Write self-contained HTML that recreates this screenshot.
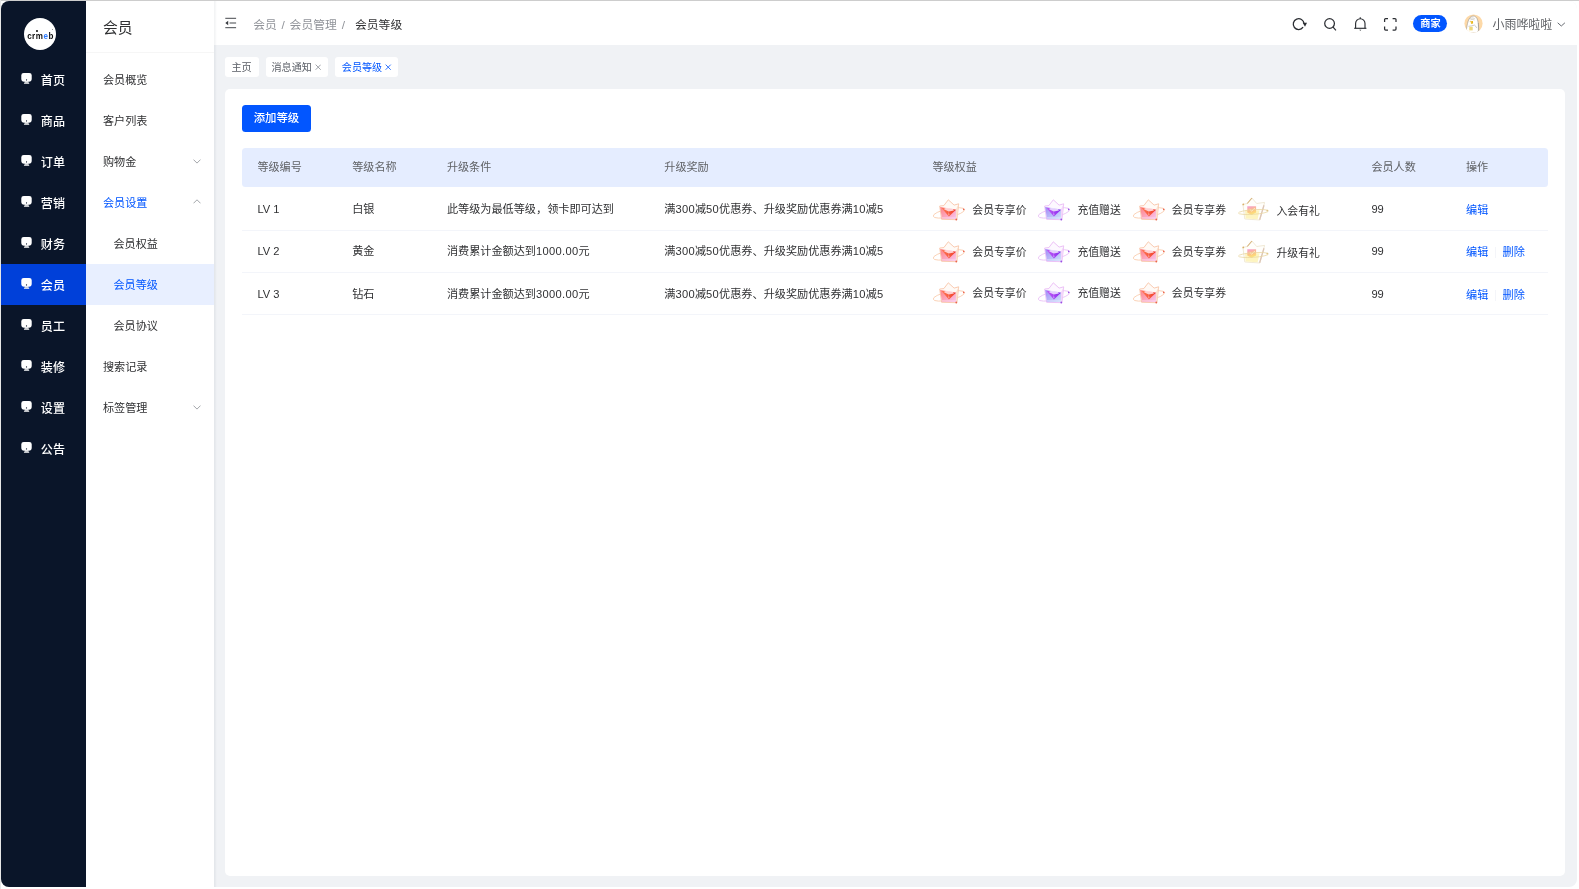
<!DOCTYPE html>
<html lang="zh-CN">
<head>
<meta charset="utf-8">
<title>会员等级</title>
<style>
*{box-sizing:border-box;margin:0;padding:0}
html,body{width:1579px;height:889px;overflow:hidden;background:#fff}
body{font-family:"Liberation Sans","Noto Sans CJK SC",sans-serif;color:#303133;position:relative;font-size:11.1px;-webkit-font-smoothing:antialiased}
.abs{position:absolute}
#topline{left:0;top:0;width:1579px;height:1px;background:#cdcdcd}
#leftline{left:0;top:0;width:1px;height:889px;background:#e6e6e6}
#app{will-change:transform;left:1px;top:1px;width:1576px;height:886px;border-radius:8px;overflow:hidden;background:#f0f2f5}
/* dark sidebar */
#dark{left:0;top:0;width:85.2px;height:886px;background:#0a1529}
#logo{left:22.6px;top:16.6px;width:32.9px;height:32.9px;border-radius:50%;background:#fff}
#logo span{position:absolute;left:-4px;width:41px;top:13.9px;text-align:center;font-weight:bold;font-size:9.6px;line-height:10px;letter-spacing:0.6px;color:#0d0d0d;transform:scaleX(.84)}
#logo b{color:#2d7bff}
#logo i{position:absolute;left:12.8px;top:12.7px;width:1.8px;height:1.8px;border-radius:50%;background:#111}
#logo u{position:absolute;left:28.6px;top:11.8px;width:1px;height:1px;border-radius:50%;background:#777}
.dm{left:0;width:85.2px;height:41px;color:#fff;font-size:12.05px;font-weight:500}
.dm.on{background:#0040d9;width:85.7px}
.dm svg{position:absolute;left:19.9px;top:14.3px}
.dm span{position:absolute;left:39.8px;top:1.7px;line-height:41px;letter-spacing:0.1px}
/* sub sidebar */
#sub{left:85px;top:0;width:128px;height:886px;background:#fff}
#subtitle{left:17px;top:1px;line-height:52px;font-size:14.8px;color:#303133}
#subline{left:0;top:50.8px;width:128px;height:1px;background:#f6f6f6}
.sm{left:0;width:128px;height:41px;font-size:11.1px;color:#303133}
.sm span{position:absolute;left:17px;top:0.5px;line-height:41px}
.sm.l2 span{left:27.5px}
.sm.act span{color:#0256ff}
.sm.on{background:#e8efff}
.sm.on span{color:#0256ff}
.sm svg{position:absolute;left:107px;top:18.2px}
.sm.act svg{top:17px}
/* header */
#hdr{left:213px;top:0;width:1363px;height:44px;background:#fff}
#shadow{left:213px;top:0;width:3px;height:886px;background:linear-gradient(90deg,rgba(0,21,41,.06),rgba(0,21,41,0))}
.bc{top:1.8px;line-height:44px;font-size:11.8px;color:#909399;white-space:nowrap}
.bc.cur{color:#303133}
#badge{left:1412.5px;top:14px;width:34px;height:17.5px;border-radius:9px;background:#0256ff;color:#fff;font-size:10.2px;line-height:17.5px;text-align:center;font-weight:bold}
#uname{left:1492px;top:1.5px;line-height:45px;font-size:11.95px;color:#606266;white-space:nowrap}
/* tabs */
.tab{top:56px;height:20px;background:#fff;border-radius:3px;font-size:10.1px;line-height:22px;color:#5a5e66;white-space:nowrap;padding-left:6.5px}
.tab.on{color:#0256ff}
.tab i{font-style:normal;position:absolute;top:0}
/* card */
#card{left:224px;top:88px;width:1340px;height:787px;background:#fff;border-radius:5px}
#btn{left:16.7px;top:16px;width:69.5px;height:26.8px;border-radius:3.5px;background:#0256ff;color:#fff;font-size:11.4px;line-height:26px;text-align:center;font-weight:500}
#thead{left:16.5px;top:59px;width:1306.6px;height:39px;background:#e5edff;border-radius:3.5px}
.th{top:0;line-height:39px;color:#606266;font-size:11.1px;white-space:nowrap}
.row{left:16.5px;width:1306.6px;height:42.4px;border-bottom:1px solid #f3f5fa}
.td{top:0.8px;line-height:42px;font-size:11.15px;color:#303133;white-space:nowrap}
.lk{color:#0256ff}
.rt{top:0;height:42px}
.rt svg{position:absolute;left:0;top:9.5px}
.rt span{position:absolute;left:39.2px;top:0.8px;line-height:42px;font-size:10.85px;white-space:nowrap;color:#303133}
.n{letter-spacing:.3px}
</style>
</head>
<body>
<div id="app" class="abs">

<!-- DARK SIDEBAR -->
<div id="dark" class="abs">
  <div id="logo" class="abs"><span>crm<b>e</b>b</span><i></i><u></u></div>
  <div class="dm abs" style="top:58px"><svg width="11.6" height="11.4" viewBox="0 0 12 12" preserveAspectRatio="none"><path d="M2.8 0h5.8a2.5 2.5 0 0 1 2.5 2.5v3.6a3 3 0 0 1-3 3H3.3a3 3 0 0 1-3-3V2.5A2.5 2.5 0 0 1 2.8 0z" fill="#fff"/><path d="M4.3 8.8h3l1.4 2.6H2.9z" fill="#fff"/><circle cx="5.7" cy="7.3" r="0.65" fill="#0a1529"/><path d="M3.3 9.9h5" stroke="#0a1529" stroke-width="0.5" opacity=".5"/></svg><span>首页</span></div>
  <div class="dm abs" style="top:99px"><svg width="11.6" height="11.4" viewBox="0 0 12 12" preserveAspectRatio="none"><path d="M2.8 0h5.8a2.5 2.5 0 0 1 2.5 2.5v3.6a3 3 0 0 1-3 3H3.3a3 3 0 0 1-3-3V2.5A2.5 2.5 0 0 1 2.8 0z" fill="#fff"/><path d="M4.3 8.8h3l1.4 2.6H2.9z" fill="#fff"/><circle cx="5.7" cy="7.3" r="0.65" fill="#0a1529"/><path d="M3.3 9.9h5" stroke="#0a1529" stroke-width="0.5" opacity=".5"/></svg><span>商品</span></div>
  <div class="dm abs" style="top:140px"><svg width="11.6" height="11.4" viewBox="0 0 12 12" preserveAspectRatio="none"><path d="M2.8 0h5.8a2.5 2.5 0 0 1 2.5 2.5v3.6a3 3 0 0 1-3 3H3.3a3 3 0 0 1-3-3V2.5A2.5 2.5 0 0 1 2.8 0z" fill="#fff"/><path d="M4.3 8.8h3l1.4 2.6H2.9z" fill="#fff"/><circle cx="5.7" cy="7.3" r="0.65" fill="#0a1529"/><path d="M3.3 9.9h5" stroke="#0a1529" stroke-width="0.5" opacity=".5"/></svg><span>订单</span></div>
  <div class="dm abs" style="top:181px"><svg width="11.6" height="11.4" viewBox="0 0 12 12" preserveAspectRatio="none"><path d="M2.8 0h5.8a2.5 2.5 0 0 1 2.5 2.5v3.6a3 3 0 0 1-3 3H3.3a3 3 0 0 1-3-3V2.5A2.5 2.5 0 0 1 2.8 0z" fill="#fff"/><path d="M4.3 8.8h3l1.4 2.6H2.9z" fill="#fff"/><circle cx="5.7" cy="7.3" r="0.65" fill="#0a1529"/><path d="M3.3 9.9h5" stroke="#0a1529" stroke-width="0.5" opacity=".5"/></svg><span>营销</span></div>
  <div class="dm abs" style="top:222px"><svg width="11.6" height="11.4" viewBox="0 0 12 12" preserveAspectRatio="none"><path d="M2.8 0h5.8a2.5 2.5 0 0 1 2.5 2.5v3.6a3 3 0 0 1-3 3H3.3a3 3 0 0 1-3-3V2.5A2.5 2.5 0 0 1 2.8 0z" fill="#fff"/><path d="M4.3 8.8h3l1.4 2.6H2.9z" fill="#fff"/><circle cx="5.7" cy="7.3" r="0.65" fill="#0a1529"/><path d="M3.3 9.9h5" stroke="#0a1529" stroke-width="0.5" opacity=".5"/></svg><span>财务</span></div>
  <div class="dm abs on" style="top:263px"><svg width="11.6" height="11.4" viewBox="0 0 12 12" preserveAspectRatio="none"><path d="M2.8 0h5.8a2.5 2.5 0 0 1 2.5 2.5v3.6a3 3 0 0 1-3 3H3.3a3 3 0 0 1-3-3V2.5A2.5 2.5 0 0 1 2.8 0z" fill="#fff"/><path d="M4.3 8.8h3l1.4 2.6H2.9z" fill="#fff"/><circle cx="5.7" cy="7.3" r="0.65" fill="#0a1529"/><path d="M3.3 9.9h5" stroke="#0a1529" stroke-width="0.5" opacity=".5"/></svg><span>会员</span></div>
  <div class="dm abs" style="top:304px"><svg width="11.6" height="11.4" viewBox="0 0 12 12" preserveAspectRatio="none"><path d="M2.8 0h5.8a2.5 2.5 0 0 1 2.5 2.5v3.6a3 3 0 0 1-3 3H3.3a3 3 0 0 1-3-3V2.5A2.5 2.5 0 0 1 2.8 0z" fill="#fff"/><path d="M4.3 8.8h3l1.4 2.6H2.9z" fill="#fff"/><circle cx="5.7" cy="7.3" r="0.65" fill="#0a1529"/><path d="M3.3 9.9h5" stroke="#0a1529" stroke-width="0.5" opacity=".5"/></svg><span>员工</span></div>
  <div class="dm abs" style="top:345px"><svg width="11.6" height="11.4" viewBox="0 0 12 12" preserveAspectRatio="none"><path d="M2.8 0h5.8a2.5 2.5 0 0 1 2.5 2.5v3.6a3 3 0 0 1-3 3H3.3a3 3 0 0 1-3-3V2.5A2.5 2.5 0 0 1 2.8 0z" fill="#fff"/><path d="M4.3 8.8h3l1.4 2.6H2.9z" fill="#fff"/><circle cx="5.7" cy="7.3" r="0.65" fill="#0a1529"/><path d="M3.3 9.9h5" stroke="#0a1529" stroke-width="0.5" opacity=".5"/></svg><span>装修</span></div>
  <div class="dm abs" style="top:386px"><svg width="11.6" height="11.4" viewBox="0 0 12 12" preserveAspectRatio="none"><path d="M2.8 0h5.8a2.5 2.5 0 0 1 2.5 2.5v3.6a3 3 0 0 1-3 3H3.3a3 3 0 0 1-3-3V2.5A2.5 2.5 0 0 1 2.8 0z" fill="#fff"/><path d="M4.3 8.8h3l1.4 2.6H2.9z" fill="#fff"/><circle cx="5.7" cy="7.3" r="0.65" fill="#0a1529"/><path d="M3.3 9.9h5" stroke="#0a1529" stroke-width="0.5" opacity=".5"/></svg><span>设置</span></div>
  <div class="dm abs" style="top:427px"><svg width="11.6" height="11.4" viewBox="0 0 12 12" preserveAspectRatio="none"><path d="M2.8 0h5.8a2.5 2.5 0 0 1 2.5 2.5v3.6a3 3 0 0 1-3 3H3.3a3 3 0 0 1-3-3V2.5A2.5 2.5 0 0 1 2.8 0z" fill="#fff"/><path d="M4.3 8.8h3l1.4 2.6H2.9z" fill="#fff"/><circle cx="5.7" cy="7.3" r="0.65" fill="#0a1529"/><path d="M3.3 9.9h5" stroke="#0a1529" stroke-width="0.5" opacity=".5"/></svg><span>公告</span></div>
  
</div>

<!-- SUB SIDEBAR -->
<div id="sub" class="abs">
  <div id="subtitle" class="abs">会员</div>
  <div id="subline" class="abs"></div>
  <div class="sm abs " style="top:58px"><span>会员概览</span></div>
  <div class="sm abs " style="top:99px"><span>客户列表</span></div>
  <div class="sm abs " style="top:140px"><span>购物金</span><svg width="8" height="5" viewBox="0 0 8 5"><path d="M0.5 0.6L4 4.1L7.5 0.6" fill="none" stroke="#8c8f94" stroke-width="0.8"/></svg></div>
  <div class="sm abs act" style="top:181px"><span>会员设置</span><svg width="8" height="5" viewBox="0 0 8 5"><path d="M0.5 4.3L4 0.8L7.5 4.3" fill="none" stroke="#8c8f94" stroke-width="0.8"/></svg></div>
  <div class="sm abs l2" style="top:222px"><span>会员权益</span></div>
  <div class="sm abs l2 on" style="top:263px"><span>会员等级</span></div>
  <div class="sm abs l2" style="top:304px"><span>会员协议</span></div>
  <div class="sm abs " style="top:345px"><span>搜索记录</span></div>
  <div class="sm abs " style="top:386px"><span>标签管理</span><svg width="8" height="5" viewBox="0 0 8 5"><path d="M0.5 0.6L4 4.1L7.5 0.6" fill="none" stroke="#8c8f94" stroke-width="0.8"/></svg></div>
  
</div>

<!-- HEADER -->
<div id="hdr" class="abs">
  
  <svg class="abs" style="left:11px;top:16px" width="12" height="12" viewBox="0 0 12 12"><path d="M0.3 1.3h10.8M4.6 6h6.5M0.3 10.7h10.8" stroke="#3a3d42" stroke-width="0.95" fill="none"/><path d="M3.2 3.7v4.6L0.3 6z" fill="#3a3d42"/></svg>
  <div class="bc abs" style="left:39.3px">会员</div>
  <div class="bc abs" style="left:67.6px">/</div>
  <div class="bc abs" style="left:75.6px">会员管理</div>
  <div class="bc abs" style="left:127.8px">/</div>
  <div class="bc abs cur" style="left:141px">会员等级</div>
  <svg class="abs" style="left:1078px;top:16px" width="16" height="15" viewBox="0 0 16 15"><path d="M12.04 6.66A5.4 5.4 0 1 0 11.08 10.23" fill="none" stroke="#2b2e33" stroke-width="1.3"/><path d="M10.7 5.8L15 5.7L13 9.7z" fill="#2b2e33"/></svg>
  <svg class="abs" style="left:1109px;top:16px" width="15" height="15" viewBox="0 0 15 15"><circle cx="6.57" cy="6.5" r="4.85" fill="none" stroke="#2b2e33" stroke-width="1.25"/><path d="M9.9 9.9L12.9 13.3" stroke="#2b2e33" stroke-width="1.25" fill="none"/></svg>
  <svg class="abs" style="left:1139px;top:15px" width="15" height="16" viewBox="0 0 15 16"><path d="M2.6 12.2V7.4a4.7 4.7 0 0 1 9.4 0v4.8" fill="none" stroke="#2b2e33" stroke-width="1.15"/><path d="M1.2 12.3h12.2" stroke="#2b2e33" stroke-width="1.15"/><circle cx="7.3" cy="2.1" r="0.8" fill="#2b2e33"/><path d="M6.2 13.8h2.2l-1.1 1z" fill="#2b2e33"/></svg>
  <svg class="abs" style="left:1169px;top:16px" width="15" height="15" viewBox="0 0 15 15"><path d="M1.6 5V2.6a1 1 0 0 1 1-1H5M9.6 1.6H12a1 1 0 0 1 1 1V5M13 9.6V12a1 1 0 0 1-1 1H9.6M5 13H2.6a1 1 0 0 1-1-1V9.6" fill="none" stroke="#2b2e33" stroke-width="1.25"/></svg>
  <div id="badge" class="abs" style="left:1199.4px;top:13.8px">商家</div>
  <svg class="abs" style="left:1249.5px;top:12.6px" width="19" height="19" viewBox="0 0 19 19"><defs><clipPath id="avc"><circle cx="9.5" cy="9.5" r="9.1"/></clipPath></defs><circle cx="9.5" cy="9.5" r="9.1" fill="#fdd9a8"/><g clip-path="url(#avc)"><path d="M2.2 17.5C3 10 4.5 2.2 9 2c4.8-.2 5.5 6 5.8 14.5L13 19H3z" fill="#fff" stroke="#9a948a" stroke-width="0.6"/><path d="M5.4 7.6l3.6-.6.1 2.6-2.3.4.6-1.2z" fill="#e8b619"/><path d="M4.5 12.3c2-.2 4-.5 6-1.2c1 .6 1.6 1.6 2.2 2.8" fill="none" stroke="#9b958a" stroke-width="0.5"/><rect x="5.3" y="12.8" width="3.4" height="3.6" fill="#efd87a"/><path d="M5.7 4.8c1.5-1.2 3.5-1.2 5.2.2M6.3 6c1.3-.8 2.8-.7 4 .1" fill="none" stroke="#aaa59b" stroke-width="0.5"/><path d="M14.4 9v8" stroke="#8f897f" stroke-width="0.5"/></g></svg>
  <div id="uname" class="abs" style="left:1278.5px">小雨哗啦啦</div>
  <svg class="abs" style="left:1343px;top:20.7px" width="9" height="5" viewBox="0 0 9 5"><path d="M0.7 0.8L4.3 4L7.9 0.8" fill="none" stroke="#5f636a" stroke-width="0.95"/></svg>

</div>
<div id="shadow" class="abs"></div>

<!-- TABS -->
<div class="tab abs" style="left:224px;width:34px">主页</div>
<div class="tab abs" style="left:264.5px;width:62.4px;padding-left:6px">消息通知<svg width="6.4" height="6.4" viewBox="0 0 7 7" style="position:absolute;top:7.2px;left:49.6px"><path d="M0.7 0.7L6.3 6.3M6.3 0.7L0.7 6.3" stroke="#8a8e95" stroke-width="0.9"/></svg></div>
<div class="tab abs on" style="left:334px;width:63.3px;padding-left:6.8px">会员等级<svg width="6.4" height="6.4" viewBox="0 0 7 7" style="position:absolute;top:7.2px;left:50.3px"><path d="M0.7 0.7L6.3 6.3M6.3 0.7L0.7 6.3" stroke="#0256ff" stroke-width="0.9"/></svg></div>

<!-- CARD -->
<div id="card" class="abs">
  <div id="btn" class="abs">添加等级</div>
  <div id="thead" class="abs">
    <div class="th abs" style="left:15.9px">等级编号</div><div class="th abs" style="left:110.7px">等级名称</div><div class="th abs" style="left:205.4px">升级条件</div><div class="th abs" style="left:422.8px">升级奖励</div><div class="th abs" style="left:690.9px">等级权益</div><div class="th abs" style="left:1129.9px">会员人数</div><div class="th abs" style="left:1224.5px">操作</div>
  </div>
  <div class="row abs" style="top:98.0px;height:43.5px"><div class="td abs" style="top:1.2px;left:15.9px">LV 1</div><div class="td abs" style="top:1.2px;left:110.7px">白银</div><div class="td abs" style="top:1.2px;left:205.4px">此等级为最低等级，领卡即可达到</div><div class="td abs" style="top:1.2px;left:422.8px">满<span class="n">300</span>减<span class="n">50</span>优惠券、升级奖励优惠券满<span class="n">10</span>减<span class="n">5</span></div><div class="rt abs" style="left:691.6px"><svg style="top:12.4px" width="33" height="23" viewBox="0 0 33 23"><defs><linearGradient id="c1a" x1="0" y1="0" x2="1" y2="1"><stop offset="0" stop-color="#ff8282"/><stop offset="1" stop-color="#f8c4f0"/></linearGradient><linearGradient id="c1b" x1="0" y1="0" x2="1" y2="0"><stop offset="0" stop-color="#ff7a58"/><stop offset="1" stop-color="#f03c28"/></linearGradient></defs><ellipse cx="15.9" cy="13.9" rx="16" ry="4.1" transform="rotate(-12 15.9 13.9)" fill="none" stroke="#f9c7a6" stroke-width="0.75"/><path d="M6.7 7L10.8 6.6L15.3 0.8L21.1 6.1L25.7 4.8L23.9 20.7L8.6 20.3Z" fill="#fffaf6" stroke="#f7b998" stroke-width="0.75" stroke-linejoin="round"/><path d="M22.9 10.4L25.5 5.2L23.8 20.5L23 20.1Z" fill="#fbdfcd"/><path d="M7.2 7.9L22.9 10.4L23 20.1L8.9 19.7Z" fill="url(#c1a)"/><path d="M8.4 8.7L23 10.7L15.9 17.5Z" fill="url(#c1b)"/><path d="M10.6 9.9L13.3 8.7L19.4 9.5L21 11.4L15.6 12.6Z" fill="#ffe4ea" opacity=".85"/><path d="M15.7 12.8L14.9 16.2L16.8 16.2Z" fill="#ffe4ea" opacity=".45"/><path d="M8.9 18.6L23 19" stroke="#fff" stroke-width="0.5" opacity=".7"/><path d="M29.8 9.5l2 0.5-1.3 1.5z" fill="#e8503a"/><circle cx="23.3" cy="20.5" r="0.9" fill="#e8503a" opacity=".85"/></svg><span style="top:2.4px">会员专享价</span></div><div class="rt abs" style="left:796.7px"><svg style="top:12.4px" width="33" height="23" viewBox="0 0 33 23"><defs><linearGradient id="c2a" x1="0" y1="0" x2="1" y2="1"><stop offset="0" stop-color="#a28af7"/><stop offset="1" stop-color="#cfe2fb"/></linearGradient><linearGradient id="c2b" x1="0" y1="0" x2="1" y2="0"><stop offset="0" stop-color="#c25af4"/><stop offset="1" stop-color="#8a2bf0"/></linearGradient></defs><ellipse cx="15.9" cy="13.9" rx="16" ry="4.1" transform="rotate(-12 15.9 13.9)" fill="none" stroke="#e8b8f5" stroke-width="0.75"/><path d="M6.7 7L10.8 6.6L15.3 0.8L21.1 6.1L25.7 4.8L23.9 20.7L8.6 20.3Z" fill="#fdf8ff" stroke="#e6aef3" stroke-width="0.75" stroke-linejoin="round"/><path d="M22.9 10.4L25.5 5.2L23.8 20.5L23 20.1Z" fill="#f3d6fa"/><path d="M7.2 7.9L22.9 10.4L23 20.1L8.9 19.7Z" fill="url(#c2a)"/><path d="M8.4 8.7L23 10.7L15.9 17.5Z" fill="url(#c2b)"/><path d="M10.6 9.9L13.3 8.7L19.4 9.5L21 11.4L15.6 12.6Z" fill="#f0e6ff" opacity=".85"/><path d="M15.7 12.8L14.9 16.2L16.8 16.2Z" fill="#f0e6ff" opacity=".45"/><path d="M8.9 18.6L23 19" stroke="#fff" stroke-width="0.5" opacity=".7"/><path d="M29.8 9.5l2 0.5-1.3 1.5z" fill="#8a3ae0"/><circle cx="23.3" cy="20.5" r="0.9" fill="#8a3ae0" opacity=".85"/></svg><span style="top:2.4px">充值赠送</span></div><div class="rt abs" style="left:891.1px"><svg style="top:12.4px" width="33" height="23" viewBox="0 0 33 23"><defs><linearGradient id="c3a" x1="0" y1="0" x2="1" y2="1"><stop offset="0" stop-color="#ff8282"/><stop offset="1" stop-color="#f8c4f0"/></linearGradient><linearGradient id="c3b" x1="0" y1="0" x2="1" y2="0"><stop offset="0" stop-color="#ff7a58"/><stop offset="1" stop-color="#f03c28"/></linearGradient></defs><ellipse cx="15.9" cy="13.9" rx="16" ry="4.1" transform="rotate(-12 15.9 13.9)" fill="none" stroke="#f9c7a6" stroke-width="0.75"/><path d="M6.7 7L10.8 6.6L15.3 0.8L21.1 6.1L25.7 4.8L23.9 20.7L8.6 20.3Z" fill="#fffaf6" stroke="#f7b998" stroke-width="0.75" stroke-linejoin="round"/><path d="M22.9 10.4L25.5 5.2L23.8 20.5L23 20.1Z" fill="#fbdfcd"/><path d="M7.2 7.9L22.9 10.4L23 20.1L8.9 19.7Z" fill="url(#c3a)"/><path d="M8.4 8.7L23 10.7L15.9 17.5Z" fill="url(#c3b)"/><path d="M10.6 9.9L13.3 8.7L19.4 9.5L21 11.4L15.6 12.6Z" fill="#ffe4ea" opacity=".85"/><path d="M15.7 12.8L14.9 16.2L16.8 16.2Z" fill="#ffe4ea" opacity=".45"/><path d="M8.9 18.6L23 19" stroke="#fff" stroke-width="0.5" opacity=".7"/><path d="M29.8 9.5l2 0.5-1.3 1.5z" fill="#e8503a"/><circle cx="23.3" cy="20.5" r="0.9" fill="#e8503a" opacity=".85"/></svg><span style="top:2.4px">会员专享券</span></div><div class="rt abs" style="left:995.8px"><svg style="top:9.9px" width="33" height="25" viewBox="0 0 33 25"><defs><linearGradient id="g4" x1="0" y1="0" x2="0.3" y2="1"><stop offset="0" stop-color="#f48fd0"/><stop offset=".5" stop-color="#fbb481"/><stop offset="1" stop-color="#fde36e"/></linearGradient></defs><path d="M5.9 7.3L10.3 6.5L14.9 1L19.7 6.5L27.6 5.4L22.9 23L7.8 22Z" fill="#fffefb" stroke="#eadfc4" stroke-width="0.7" stroke-linejoin="round"/><path d="M10.3 6.5L14.9 1" stroke="#d7b57e" stroke-width="1.1"/><circle cx="6.3" cy="7.4" r="0.9" fill="#d9b06a"/><path d="M27 8.2L22.6 22.8" stroke="#dcc5b6" stroke-width="1.3"/><path d="M8 13.3L22.6 13.3L20.6 22.2L8.6 21.6Z" fill="#fdf3bd" opacity=".95"/><path d="M10.3 9.2h8.8v6.3l-4.5 2.5l-4.3-2.5z" fill="url(#g4)" opacity=".9"/><path d="M12.8 12.4l2 1.8l3-3.2" fill="none" stroke="#fff6d8" stroke-width="0.9" opacity=".9"/><ellipse cx="16.4" cy="15" rx="15" ry="2.3" transform="rotate(-4 16.4 15)" fill="none" stroke="#e9d6a0" stroke-width="0.75"/><circle cx="30.3" cy="13.6" r="0.9" fill="#dfc488"/></svg><span style="top:2.8px">入会有礼</span></div><div class="td abs" style="top:1.2px;left:1129.9px">99</div><div class="td abs lk" style="top:1.6px;left:1224.5px">编辑</div></div>
  <div class="row abs" style="top:141.5px;height:42.7px"><div class="td abs" style="top:-0.5px;left:15.9px">LV 2</div><div class="td abs" style="top:-0.5px;left:110.7px">黄金</div><div class="td abs" style="top:-0.5px;left:205.4px">消费累计金额达到<span class="n">1000.00</span>元</div><div class="td abs" style="top:-0.5px;left:422.8px">满<span class="n">300</span>减<span class="n">50</span>优惠券、升级奖励优惠券满<span class="n">10</span>减<span class="n">5</span></div><div class="rt abs" style="left:691.6px"><svg style="top:10.7px" width="33" height="23" viewBox="0 0 33 23"><defs><linearGradient id="c5a" x1="0" y1="0" x2="1" y2="1"><stop offset="0" stop-color="#ff8282"/><stop offset="1" stop-color="#f8c4f0"/></linearGradient><linearGradient id="c5b" x1="0" y1="0" x2="1" y2="0"><stop offset="0" stop-color="#ff7a58"/><stop offset="1" stop-color="#f03c28"/></linearGradient></defs><ellipse cx="15.9" cy="13.9" rx="16" ry="4.1" transform="rotate(-12 15.9 13.9)" fill="none" stroke="#f9c7a6" stroke-width="0.75"/><path d="M6.7 7L10.8 6.6L15.3 0.8L21.1 6.1L25.7 4.8L23.9 20.7L8.6 20.3Z" fill="#fffaf6" stroke="#f7b998" stroke-width="0.75" stroke-linejoin="round"/><path d="M22.9 10.4L25.5 5.2L23.8 20.5L23 20.1Z" fill="#fbdfcd"/><path d="M7.2 7.9L22.9 10.4L23 20.1L8.9 19.7Z" fill="url(#c5a)"/><path d="M8.4 8.7L23 10.7L15.9 17.5Z" fill="url(#c5b)"/><path d="M10.6 9.9L13.3 8.7L19.4 9.5L21 11.4L15.6 12.6Z" fill="#ffe4ea" opacity=".85"/><path d="M15.7 12.8L14.9 16.2L16.8 16.2Z" fill="#ffe4ea" opacity=".45"/><path d="M8.9 18.6L23 19" stroke="#fff" stroke-width="0.5" opacity=".7"/><path d="M29.8 9.5l2 0.5-1.3 1.5z" fill="#e8503a"/><circle cx="23.3" cy="20.5" r="0.9" fill="#e8503a" opacity=".85"/></svg><span style="top:0.0px">会员专享价</span></div><div class="rt abs" style="left:796.7px"><svg style="top:10.7px" width="33" height="23" viewBox="0 0 33 23"><defs><linearGradient id="c6a" x1="0" y1="0" x2="1" y2="1"><stop offset="0" stop-color="#a28af7"/><stop offset="1" stop-color="#cfe2fb"/></linearGradient><linearGradient id="c6b" x1="0" y1="0" x2="1" y2="0"><stop offset="0" stop-color="#c25af4"/><stop offset="1" stop-color="#8a2bf0"/></linearGradient></defs><ellipse cx="15.9" cy="13.9" rx="16" ry="4.1" transform="rotate(-12 15.9 13.9)" fill="none" stroke="#e8b8f5" stroke-width="0.75"/><path d="M6.7 7L10.8 6.6L15.3 0.8L21.1 6.1L25.7 4.8L23.9 20.7L8.6 20.3Z" fill="#fdf8ff" stroke="#e6aef3" stroke-width="0.75" stroke-linejoin="round"/><path d="M22.9 10.4L25.5 5.2L23.8 20.5L23 20.1Z" fill="#f3d6fa"/><path d="M7.2 7.9L22.9 10.4L23 20.1L8.9 19.7Z" fill="url(#c6a)"/><path d="M8.4 8.7L23 10.7L15.9 17.5Z" fill="url(#c6b)"/><path d="M10.6 9.9L13.3 8.7L19.4 9.5L21 11.4L15.6 12.6Z" fill="#f0e6ff" opacity=".85"/><path d="M15.7 12.8L14.9 16.2L16.8 16.2Z" fill="#f0e6ff" opacity=".45"/><path d="M8.9 18.6L23 19" stroke="#fff" stroke-width="0.5" opacity=".7"/><path d="M29.8 9.5l2 0.5-1.3 1.5z" fill="#8a3ae0"/><circle cx="23.3" cy="20.5" r="0.9" fill="#8a3ae0" opacity=".85"/></svg><span style="top:0.0px">充值赠送</span></div><div class="rt abs" style="left:891.1px"><svg style="top:10.7px" width="33" height="23" viewBox="0 0 33 23"><defs><linearGradient id="c7a" x1="0" y1="0" x2="1" y2="1"><stop offset="0" stop-color="#ff8282"/><stop offset="1" stop-color="#f8c4f0"/></linearGradient><linearGradient id="c7b" x1="0" y1="0" x2="1" y2="0"><stop offset="0" stop-color="#ff7a58"/><stop offset="1" stop-color="#f03c28"/></linearGradient></defs><ellipse cx="15.9" cy="13.9" rx="16" ry="4.1" transform="rotate(-12 15.9 13.9)" fill="none" stroke="#f9c7a6" stroke-width="0.75"/><path d="M6.7 7L10.8 6.6L15.3 0.8L21.1 6.1L25.7 4.8L23.9 20.7L8.6 20.3Z" fill="#fffaf6" stroke="#f7b998" stroke-width="0.75" stroke-linejoin="round"/><path d="M22.9 10.4L25.5 5.2L23.8 20.5L23 20.1Z" fill="#fbdfcd"/><path d="M7.2 7.9L22.9 10.4L23 20.1L8.9 19.7Z" fill="url(#c7a)"/><path d="M8.4 8.7L23 10.7L15.9 17.5Z" fill="url(#c7b)"/><path d="M10.6 9.9L13.3 8.7L19.4 9.5L21 11.4L15.6 12.6Z" fill="#ffe4ea" opacity=".85"/><path d="M15.7 12.8L14.9 16.2L16.8 16.2Z" fill="#ffe4ea" opacity=".45"/><path d="M8.9 18.6L23 19" stroke="#fff" stroke-width="0.5" opacity=".7"/><path d="M29.8 9.5l2 0.5-1.3 1.5z" fill="#e8503a"/><circle cx="23.3" cy="20.5" r="0.9" fill="#e8503a" opacity=".85"/></svg><span style="top:0.0px">会员专享券</span></div><div class="rt abs" style="left:995.8px"><svg style="top:9.9px" width="33" height="25" viewBox="0 0 33 25"><defs><linearGradient id="g8" x1="0" y1="0" x2="0.3" y2="1"><stop offset="0" stop-color="#f48fd0"/><stop offset=".5" stop-color="#fbb481"/><stop offset="1" stop-color="#fde36e"/></linearGradient></defs><path d="M5.9 7.3L10.3 6.5L14.9 1L19.7 6.5L27.6 5.4L22.9 23L7.8 22Z" fill="#fffefb" stroke="#eadfc4" stroke-width="0.7" stroke-linejoin="round"/><path d="M10.3 6.5L14.9 1" stroke="#d7b57e" stroke-width="1.1"/><circle cx="6.3" cy="7.4" r="0.9" fill="#d9b06a"/><path d="M27 8.2L22.6 22.8" stroke="#dcc5b6" stroke-width="1.3"/><path d="M8 13.3L22.6 13.3L20.6 22.2L8.6 21.6Z" fill="#fdf3bd" opacity=".95"/><path d="M10.3 9.2h8.8v6.3l-4.5 2.5l-4.3-2.5z" fill="url(#g8)" opacity=".9"/><path d="M12.8 12.4l2 1.8l3-3.2" fill="none" stroke="#fff6d8" stroke-width="0.9" opacity=".9"/><ellipse cx="16.4" cy="15" rx="15" ry="2.3" transform="rotate(-4 16.4 15)" fill="none" stroke="#e9d6a0" stroke-width="0.75"/><circle cx="30.3" cy="13.6" r="0.9" fill="#dfc488"/></svg><span style="top:1.7px">升级有礼</span></div><div class="td abs" style="top:-0.5px;left:1129.9px">99</div><div class="td abs lk" style="top:0.8px;left:1224.5px">编辑</div><div class="abs" style="left:1253.3px;top:16.3px;width:1px;height:11px;background:#f4f5f9"></div><div class="td abs lk" style="top:0.8px;left:1261.1px">删除</div></div>
  <div class="row abs" style="top:184.2px;height:42.0px"><div class="td abs" style="top:-0.2px;left:15.9px">LV 3</div><div class="td abs" style="top:-0.2px;left:110.7px">钻石</div><div class="td abs" style="top:-0.2px;left:205.4px">消费累计金额达到<span class="n">3000.00</span>元</div><div class="td abs" style="top:-0.2px;left:422.8px">满<span class="n">300</span>减<span class="n">50</span>优惠券、升级奖励优惠券满<span class="n">10</span>减<span class="n">5</span></div><div class="rt abs" style="left:691.6px"><svg style="top:9.0px" width="33" height="23" viewBox="0 0 33 23"><defs><linearGradient id="c9a" x1="0" y1="0" x2="1" y2="1"><stop offset="0" stop-color="#ff8282"/><stop offset="1" stop-color="#f8c4f0"/></linearGradient><linearGradient id="c9b" x1="0" y1="0" x2="1" y2="0"><stop offset="0" stop-color="#ff7a58"/><stop offset="1" stop-color="#f03c28"/></linearGradient></defs><ellipse cx="15.9" cy="13.9" rx="16" ry="4.1" transform="rotate(-12 15.9 13.9)" fill="none" stroke="#f9c7a6" stroke-width="0.75"/><path d="M6.7 7L10.8 6.6L15.3 0.8L21.1 6.1L25.7 4.8L23.9 20.7L8.6 20.3Z" fill="#fffaf6" stroke="#f7b998" stroke-width="0.75" stroke-linejoin="round"/><path d="M22.9 10.4L25.5 5.2L23.8 20.5L23 20.1Z" fill="#fbdfcd"/><path d="M7.2 7.9L22.9 10.4L23 20.1L8.9 19.7Z" fill="url(#c9a)"/><path d="M8.4 8.7L23 10.7L15.9 17.5Z" fill="url(#c9b)"/><path d="M10.6 9.9L13.3 8.7L19.4 9.5L21 11.4L15.6 12.6Z" fill="#ffe4ea" opacity=".85"/><path d="M15.7 12.8L14.9 16.2L16.8 16.2Z" fill="#ffe4ea" opacity=".45"/><path d="M8.9 18.6L23 19" stroke="#fff" stroke-width="0.5" opacity=".7"/><path d="M29.8 9.5l2 0.5-1.3 1.5z" fill="#e8503a"/><circle cx="23.3" cy="20.5" r="0.9" fill="#e8503a" opacity=".85"/></svg><span style="top:-0.8px">会员专享价</span></div><div class="rt abs" style="left:796.7px"><svg style="top:9.0px" width="33" height="23" viewBox="0 0 33 23"><defs><linearGradient id="c10a" x1="0" y1="0" x2="1" y2="1"><stop offset="0" stop-color="#a28af7"/><stop offset="1" stop-color="#cfe2fb"/></linearGradient><linearGradient id="c10b" x1="0" y1="0" x2="1" y2="0"><stop offset="0" stop-color="#c25af4"/><stop offset="1" stop-color="#8a2bf0"/></linearGradient></defs><ellipse cx="15.9" cy="13.9" rx="16" ry="4.1" transform="rotate(-12 15.9 13.9)" fill="none" stroke="#e8b8f5" stroke-width="0.75"/><path d="M6.7 7L10.8 6.6L15.3 0.8L21.1 6.1L25.7 4.8L23.9 20.7L8.6 20.3Z" fill="#fdf8ff" stroke="#e6aef3" stroke-width="0.75" stroke-linejoin="round"/><path d="M22.9 10.4L25.5 5.2L23.8 20.5L23 20.1Z" fill="#f3d6fa"/><path d="M7.2 7.9L22.9 10.4L23 20.1L8.9 19.7Z" fill="url(#c10a)"/><path d="M8.4 8.7L23 10.7L15.9 17.5Z" fill="url(#c10b)"/><path d="M10.6 9.9L13.3 8.7L19.4 9.5L21 11.4L15.6 12.6Z" fill="#f0e6ff" opacity=".85"/><path d="M15.7 12.8L14.9 16.2L16.8 16.2Z" fill="#f0e6ff" opacity=".45"/><path d="M8.9 18.6L23 19" stroke="#fff" stroke-width="0.5" opacity=".7"/><path d="M29.8 9.5l2 0.5-1.3 1.5z" fill="#8a3ae0"/><circle cx="23.3" cy="20.5" r="0.9" fill="#8a3ae0" opacity=".85"/></svg><span style="top:-0.8px">充值赠送</span></div><div class="rt abs" style="left:891.1px"><svg style="top:9.0px" width="33" height="23" viewBox="0 0 33 23"><defs><linearGradient id="c11a" x1="0" y1="0" x2="1" y2="1"><stop offset="0" stop-color="#ff8282"/><stop offset="1" stop-color="#f8c4f0"/></linearGradient><linearGradient id="c11b" x1="0" y1="0" x2="1" y2="0"><stop offset="0" stop-color="#ff7a58"/><stop offset="1" stop-color="#f03c28"/></linearGradient></defs><ellipse cx="15.9" cy="13.9" rx="16" ry="4.1" transform="rotate(-12 15.9 13.9)" fill="none" stroke="#f9c7a6" stroke-width="0.75"/><path d="M6.7 7L10.8 6.6L15.3 0.8L21.1 6.1L25.7 4.8L23.9 20.7L8.6 20.3Z" fill="#fffaf6" stroke="#f7b998" stroke-width="0.75" stroke-linejoin="round"/><path d="M22.9 10.4L25.5 5.2L23.8 20.5L23 20.1Z" fill="#fbdfcd"/><path d="M7.2 7.9L22.9 10.4L23 20.1L8.9 19.7Z" fill="url(#c11a)"/><path d="M8.4 8.7L23 10.7L15.9 17.5Z" fill="url(#c11b)"/><path d="M10.6 9.9L13.3 8.7L19.4 9.5L21 11.4L15.6 12.6Z" fill="#ffe4ea" opacity=".85"/><path d="M15.7 12.8L14.9 16.2L16.8 16.2Z" fill="#ffe4ea" opacity=".45"/><path d="M8.9 18.6L23 19" stroke="#fff" stroke-width="0.5" opacity=".7"/><path d="M29.8 9.5l2 0.5-1.3 1.5z" fill="#e8503a"/><circle cx="23.3" cy="20.5" r="0.9" fill="#e8503a" opacity=".85"/></svg><span style="top:-0.8px">会员专享券</span></div><div class="td abs" style="top:-0.2px;left:1129.9px">99</div><div class="td abs lk" style="top:0.9px;left:1224.5px">编辑</div><div class="abs" style="left:1253.3px;top:16.4px;width:1px;height:11px;background:#f4f5f9"></div><div class="td abs lk" style="top:0.9px;left:1261.1px">删除</div></div>
  
</div>

</div>
<div id="topline" class="abs"></div>
<div id="leftline" class="abs"></div>
</body>
</html>
